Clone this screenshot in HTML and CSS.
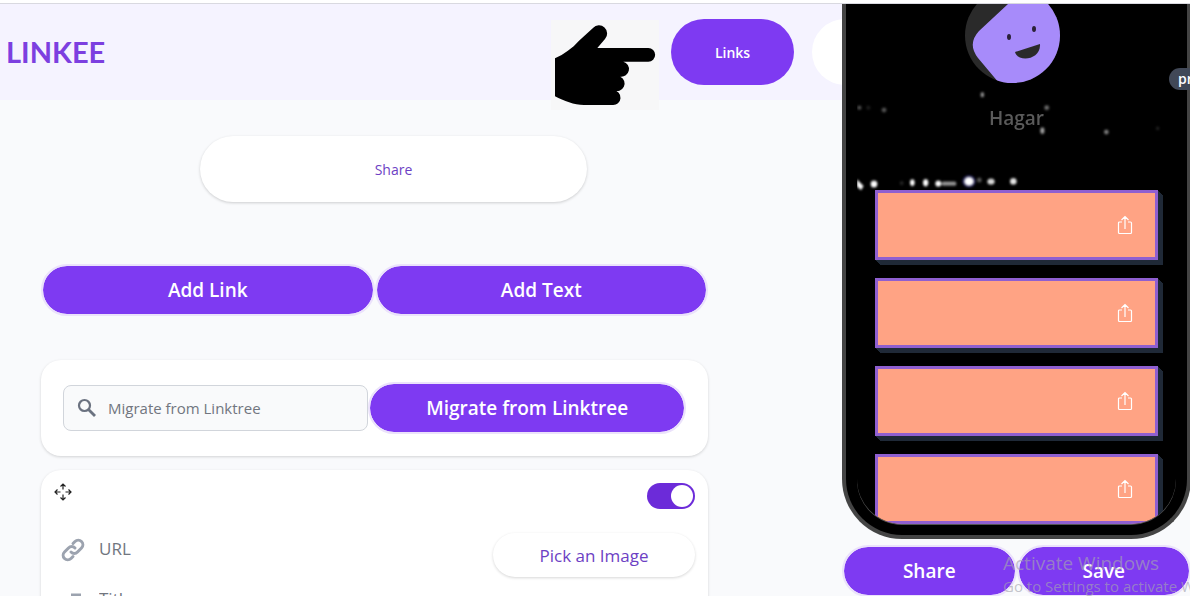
FILE: index.html
```html
<!DOCTYPE html>
<html lang="en">
<head>
  <meta charset="UTF-8" />
  <meta name="viewport" content="width=device-width, initial-scale=1" />
  <title>Linkee</title>
  <link rel="stylesheet" href="styles.css">
</head>
<body>
  <!-- Shared icons -->
  <svg class="sprite" aria-hidden="true">
    <symbol id="icon-share" viewBox="0 0 16 20">
      <path d="M5 7H2.500a1 1 0 0 0-1 1v9.500a1 1 0 0 0 1 1h11a1 1 0 0 0 1-1V8a1 1 0 0 0-1-1H11M8 14V1.500M4.500 5L8 1.500 11.500 5" fill="none" stroke="currentColor" stroke-width="1.200" />
    </symbol>
  </svg>

  <div class="layout">
    <div class="editor">
      <header class="header">
        <a href="#" class="logo">LINKEE</a>
        <nav class="nav">
          <div class="pointer">
            <svg viewBox="62 60 322 270" aria-hidden="true">
              <path d="M73 175C100 162 125 145 145 122L187 84A24 24 0 0 1 223 117L200 144H353A20 20 0 0 1 353 185H278A23 23 0 0 1 269 230A21 21 0 0 1 249 271A22 22 0 0 1 246 315H160C130 315 100 303 73 289Z" />
            </svg>
          </div>
          <a href="#" class="nav-pill active">Links</a>
          <a href="#" class="nav-pill" aria-label="Appearance"></a>
        </nav>
      </header>

      <div class="share-row">
        <button type="button" class="share-pill">Share</button>
      </div>

      <main class="content">
        <div class="actions">
          <button type="button" class="btn">Add Link</button>
          <button type="button" class="btn">Add Text</button>
        </div>

        <form class="card migrate">
          <div class="search">
            <svg viewBox="0 0 20 20" aria-hidden="true">
              <circle cx="7.500" cy="7.500" r="5.500" fill="none" stroke="currentColor" stroke-width="2.200" />
              <path d="M11.500 11.500L18 18" stroke="currentColor" stroke-width="2.800" />
            </svg>
            <input type="text" placeholder="Migrate from Linktree" aria-label="Migrate from Linktree" />
          </div>
          <button type="button" class="btn">Migrate from Linktree</button>
        </form>

        <section class="card link-card">
          <div class="link-top">
            <svg class="move" viewBox="0 0 18 18" aria-hidden="true">
              <path d="M9 6.500V1M6.500 3.500L9 1l2.500 2.500M9 11.500V17M6.500 14.500L9 17l2.500-2.500M6.500 9H1M3.500 6.500L1 9l2.500 2.500M11.500 9H17M14.500 6.500L17 9l-2.500 2.500" fill="none" stroke="currentColor" stroke-width="1.200" />
            </svg>
            <input type="checkbox" class="toggle" aria-label="Show link" checked />
          </div>
          <div class="link-body">
            <div class="fields">
              <div class="field">
                <svg viewBox="0 0 24 24" aria-hidden="true">
                  <g fill="none" stroke="currentColor" stroke-width="3" stroke-linecap="round">
                    <path d="M10 14a4.500 4.500 0 0 0 6.500 0l4-4a4.500 4.500 0 0 0-6.500-6.500l-2 2" />
                    <path d="M14 10a4.500 4.500 0 0 0-6.500 0l-4 4a4.500 4.500 0 0 0 6.500 6.500l2-2" />
                  </g>
                </svg>
                <input type="text" placeholder="URL" aria-label="URL" />
              </div>
              <div class="field">
                <svg viewBox="0 0 24 24" aria-hidden="true">
                  <path d="M10 7h10M15 7v15M4 13h8M8 13v9" fill="none" stroke="currentColor" stroke-width="3" />
                </svg>
                <input type="text" placeholder="Title" aria-label="Title" />
              </div>
            </div>
            <button type="button" class="pick">Pick an Image</button>
          </div>
        </section>
      </main>
    </div>

    <!-- Phone preview -->
    <aside class="preview">
      <div class="phone">
        <div class="screen">
          <svg class="lights" viewBox="66 12 957 600" aria-hidden="true">
            <defs>
              <filter id="soft" x="-50%" y="-50%" width="200%" height="200%"><feGaussianBlur stdDeviation="3" /></filter>
            </defs>
            <g fill="#fff" filter="url(#soft)">
              <ellipse cx="442" cy="284" rx="5" ry="8" opacity=".6" />
              <circle cx="73" cy="323" r="6" opacity=".35" />
              <circle cx="100" cy="323" r="6" opacity=".12" />
              <circle cx="147" cy="330" r="7" opacity=".35" />
              <circle cx="635" cy="323" r="7" opacity=".45" />
              <ellipse cx="622" cy="392" rx="6" ry="10" opacity=".65" />
              <circle cx="814" cy="396" r="7" opacity=".5" />
              <circle cx="968" cy="385" r="5" opacity=".15" />
              <path d="M66 538l20 20-8 12-12-10z" />
              <circle cx="117" cy="552" r="10" />
              <circle cx="200" cy="549" r="6" opacity=".15" />
              <ellipse cx="232" cy="548" rx="7" ry="10" />
              <ellipse cx="272" cy="548" rx="8" ry="11" />
              <circle cx="310" cy="551" r="9" />
              <rect x="320" y="545" width="44" height="12" rx="5" opacity=".6" />
              <ellipse cx="402" cy="544" rx="20" ry="18" fill="#4a46c8" opacity=".5" />
              <ellipse cx="402" cy="544" rx="14" ry="13" />
              <circle cx="433" cy="540" r="7" opacity=".35" />
              <ellipse cx="468" cy="545" rx="11" ry="9" opacity=".85" />
              <circle cx="535" cy="544" r="10" opacity=".9" />
            </g>
          </svg>
          <svg class="avatar" viewBox="0 0 95 95" aria-hidden="true">
            <clipPath id="round"><circle cx="47.500" cy="47.500" r="47.500" /></clipPath>
            <g clip-path="url(#round)">
              <rect width="95" height="95" fill="#2a2a2a" />
              <path d="M58 0L43 16 14 43Q2 56 13 70L34 95H95V0Z" fill="#a78bfa" />
              <ellipse cx="44" cy="49" rx="2" ry="3" fill="#2b2138" />
              <ellipse cx="69" cy="41" rx="2" ry="3" fill="#2b2138" />
              <path d="M50 64L75 56C76 72 53 75 50 64Z" fill="#2a2a2a" />
            </g>
          </svg>
          <div class="name">Hagar</div>
          <div class="links">
            <a href="#" class="link" aria-label="Link 1"><svg><use href="#icon-share" /></svg></a>
            <a href="#" class="link" aria-label="Link 2"><svg><use href="#icon-share" /></svg></a>
            <a href="#" class="link" aria-label="Link 3"><svg><use href="#icon-share" /></svg></a>
            <a href="#" class="link" aria-label="Link 4"><svg><use href="#icon-share" /></svg></a>
          </div>
        </div>
      </div>
      <div class="preview-actions">
        <button type="button" class="btn">Share</button>
        <button type="button" class="btn">Save</button>
      </div>
      <div class="tag">preview</div>
      <div class="watermark">
        <div class="watermark-title">Activate Windows</div>
        <div>Go to Settings to activate Windows.</div>
      </div>
    </aside>
  </div>
</body>
</html>
```

FILE: styles.css
```css
* {
  box-sizing: border-box;
}

body {
  margin: 0;
  height: 100vh;
  overflow: hidden;
  font-family: 'Open Sans', 'Noto Sans', sans-serif;
  font-size: 15px;
  background-color: #f9fafc;
  border-top: 3px solid #fff;
}

a {
  text-decoration: none;
}

button,
input {
  font-family: inherit;
}

.sprite {
  display: none;
}

.layout {
  display: grid;
  grid-template-columns: 1fr 348px;
  height: 100%;
  border-top: 1px solid #d9d9e0;
}

.editor {
  min-width: 0;
}

/* Header */
.header {
  display: flex;
  justify-content: space-between;
  align-items: center;
  height: 96px;
  padding-left: 6px;
  background: #f5f3ff;
  overflow-x: clip;
}

.logo {
  font-family: Lato, sans-serif;
  font-weight: 700;
  font-size: 29px;
  line-height: 32px;
  color: #7c3fe0;
}

.nav {
  position: relative;
  display: flex;
  gap: 18px;
  margin-right: -93px;
}

/* Hand sits over the lower edge of the header */
.pointer {
  position: absolute;
  right: 100%;
  top: 1px;
  width: 108px;
  height: 90px;
  margin-right: 12px;
  background: #f7f7f8;
}

.pointer svg {
  display: block;
  width: 100%;
  height: 100%;
}

.nav-pill {
  display: flex;
  justify-content: center;
  align-items: center;
  width: 123px;
  height: 66px;
  border-radius: 33px;
  background: #fff;
  font-weight: 600;
  font-size: 14px;
  color: #6d3fc4;
}

.nav-pill.active {
  background: #7e3af2;
  color: #fff;
}

/* Share pill */
.share-row {
  display: flex;
  justify-content: center;
  padding: 36px 55px 62px 0;
}

.share-pill {
  width: 387px;
  height: 66px;
  border: 0;
  border-radius: 33px;
  background: #fff;
  box-shadow: 0 1px 3px rgba(0, 0, 0, 0.18);
  font-weight: 500;
  font-size: 14px;
  color: #6d3fc4;
}

/* Buttons */
.btn {
  flex: 1;
  height: 52px;
  padding: 0;
  border: 2px solid #ebe2fb;
  border-radius: 26px;
  background: #7e3af2;
  background-clip: padding-box;
  font-weight: 600;
  font-size: 19px;
  color: #fff;
}

.content {
  padding: 0 134px 0 41px;
}

.actions {
  display: flex;
  margin-bottom: 44px;
}

/* Cards */
.card {
  margin-bottom: 14px;
  border-radius: 20px;
  background: #fff;
  box-shadow: 0 1px 3px rgba(0, 0, 0, 0.16);
}

.migrate {
  display: flex;
  align-items: center;
  padding: 22px;
}

.migrate .btn {
  flex: 0 0 51%;
}

.search {
  display: flex;
  flex: 1;
  align-items: center;
  gap: 11px;
  height: 46px;
  padding-left: 13px;
  border: 1px solid #d1d5db;
  border-radius: 8px;
  background: #f9fafb;
  color: #6b7280;
}

.search svg {
  flex: none;
  width: 20px;
  height: 20px;
}

.search input,
.field input {
  flex: 1;
  min-width: 0;
  padding: 0;
  border: 0;
  background: none;
  font-size: 15px;
}

input::placeholder {
  color: #71767f;
}

.link-card {
  padding: 13px;
}

.link-top {
  display: flex;
  justify-content: space-between;
  margin-bottom: 24px;
}

.move {
  width: 18px;
  height: 18px;
  color: #222;
}

.toggle {
  display: flex;
  justify-content: flex-end;
  appearance: none;
  width: 48px;
  height: 26px;
  margin: 0;
  padding: 2px;
  border-radius: 13px;
  background: #6c2bd9;
}

.toggle::before {
  content: '';
  width: 22px;
  height: 22px;
  border-radius: 50%;
  background: #fff;
}

.link-body {
  display: flex;
  align-items: flex-start;
}

.fields {
  flex: 1;
  padding-left: 7px;
}

.field {
  display: flex;
  align-items: center;
  gap: 14px;
  height: 30px;
  margin-bottom: 20px;
  color: #9ca3af;
}

.field svg {
  width: 24px;
  height: 24px;
  margin-top: 4px;
}

.field input {
  font-size: 17px;
}

.pick {
  width: 202px;
  height: 44px;
  border: 0;
  border-radius: 22px;
  background: #fff;
  box-shadow: 0 1px 3px rgba(0, 0, 0, 0.16);
  font-weight: 500;
  font-size: 17px;
  color: #6d3fc4;
}

/* Phone preview */
.preview {
  position: relative;
  display: flex;
  flex-direction: column;
  height: calc(100vh - 3px);
  margin-right: -1px;
}

.phone {
  flex: 1;
  min-height: 0;
  padding: 0 11px 11px;
  border: 4px solid #444;
  border-top: 0;
  border-radius: 0 0 60px 60px;
  background: #000;
}

.screen {
  position: relative;
  display: flex;
  flex-direction: column;
  align-items: center;
  height: 100%;
  overflow: hidden;
  border-radius: 0 0 45px 45px;
  box-shadow: 0 1px 0 #555;
}

.lights {
  position: absolute;
  top: 0;
  left: 0;
  width: 100%;
}

/* Scrolled up, so the top of the circle is cut off */
.avatar {
  position: relative;
  flex: none;
  width: 95px;
  height: 95px;
  margin-top: -16px;
  margin-right: 8px;
}

.name {
  position: relative;
  margin-top: 22px;
  font-weight: 600;
  font-size: 19px;
  line-height: 26px;
  color: #5a5a5a;
}

.links {
  display: flex;
  flex-direction: column;
  gap: 18px;
  width: 100%;
  padding: 59px 18px 0;
}

.link {
  display: flex;
  flex: none;
  justify-content: flex-end;
  align-items: center;
  height: 70px;
  padding-right: 22px;
  border: 3px solid #8f5fd0;
  background: #ffa384;
  box-shadow: 1px 1px #1f2937, 2px 2px #1f2937, 3px 3px #1f2937, 4px 4px #1f2937, 5px 5px #1f2937;
  color: #fff;
}

.link svg {
  width: 16px;
  height: 20px;
}

.preview-actions {
  display: flex;
  flex: none;
  padding-top: 6px;
}

.tag {
  position: absolute;
  top: 64px;
  right: -46px;
  width: 68px;
  padding-left: 9px;
  border-radius: 11px;
  background: #414857;
  font-weight: 600;
  font-size: 14px;
  line-height: 22px;
  color: #fff;
}

/* System watermark */
.watermark {
  position: absolute;
  left: 161px;
  bottom: 1px;
  font-size: 15px;
  line-height: 20px;
  white-space: nowrap;
  color: rgba(165, 165, 175, 0.65);
  pointer-events: none;
}

.watermark-title {
  font-size: 19px;
  line-height: 26px;
}
```
